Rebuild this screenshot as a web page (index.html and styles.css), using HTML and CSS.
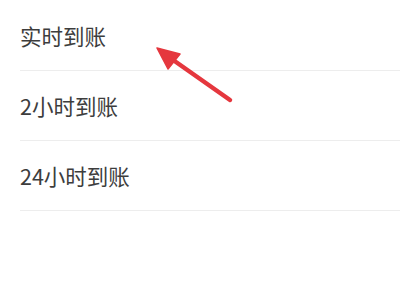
FILE: index.html
```html
<!DOCTYPE html>
<html lang="zh-CN">
<head>
<meta charset="utf-8">
<link rel="stylesheet" href="styles.css">
</head>
<body>
<div class="list">
  <div class="item">实时到账</div>
  <div class="item">2小时到账</div>
  <div class="item">24小时到账</div>
</div>
<svg class="arrow" width="400" height="300" viewBox="0 0 400 300">
  <line x1="230" y1="100" x2="166" y2="55" stroke="#e5373e" stroke-width="4.5" stroke-linecap="round"/>
  <polygon points="157,48 180,54 168,69" fill="#e5373e" stroke="#e5373e" stroke-width="1.5" stroke-linejoin="round"/>
</svg>
</body>
</html>
```
FILE: styles.css
```css
html, body {
  margin: 0;
  padding: 0;
  background: #ffffff;
  width: 400px;
  height: 300px;
  overflow: hidden;
}
body {
  position: relative;
  font-family: "Noto Sans CJK SC", "Noto Sans", sans-serif;
}
.list {
  padding-left: 20px;
  padding-top: 1px;
}
.item {
  height: 70px;
  line-height: 70px;
  font-size: 21.5px;
  color: #3d3d3d;
  border-bottom: 1px solid #ededed;
  box-sizing: border-box;
}
.arrow {
  position: absolute;
  left: 0;
  top: 0;
}
```
